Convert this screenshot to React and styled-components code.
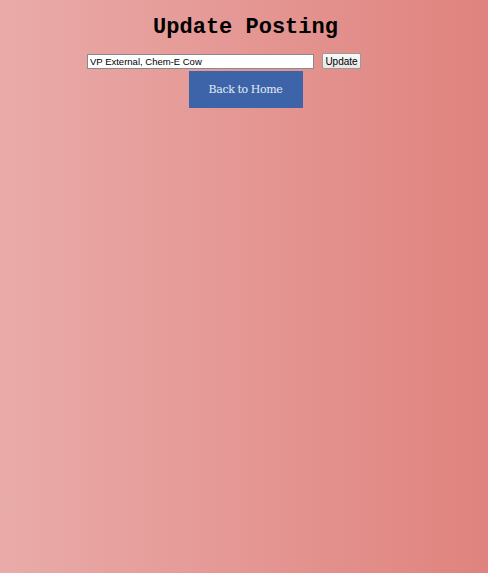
import React, { useState } from "react";
import styled, { createGlobalStyle } from "styled-components";

const GlobalStyle = createGlobalStyle`
	html, body {
		margin: 0;
		min-height: 100%;
	}
	body {
		background: linear-gradient(to right, #e9aba9, #e0837e);
		font-family: "Liberation Sans", Arial, sans-serif;
	}
`;

const Page = styled.div`
	min-height: 573px;
	display: flex;
	flex-direction: column;
	align-items: center;
	padding: 15px 0 0 3px;
	box-sizing: border-box;
`;

const Title = styled.h1`
	margin: 0 0 12px;
	font-family: "Liberation Mono", "Courier New", monospace;
	font-size: 22px;
	font-weight: bold;
	color: #000;
	line-height: 26px;
`;

const Form = styled.form`
	display: flex;
	align-items: center;
	gap: 8px;
	margin-left: -43px;
`;

const Input = styled.input`
	width: 227px;
	height: 15px;
	box-sizing: border-box;
	border: 1px solid #8a8a8a;
	padding: 0 2px;
	font-family: "Liberation Sans", Arial, sans-serif;
	font-size: 9.5px;
	color: #000;
	background: #fff;
`;

const SubmitButton = styled.button`
	width: 39px;
	height: 16px;
	padding: 0;
	box-sizing: border-box;
	border: 1px solid #9a9a9a;
	border-radius: 2px;
	background: linear-gradient(#fafafa, #e6e6e6);
	font-family: "Liberation Sans", Arial, sans-serif;
	font-size: 10px;
	color: #000;
`;

const HomeButton = styled.a`
	display: flex;
	align-items: center;
	justify-content: center;
	width: 114px;
	height: 37px;
	margin-top: 2px;
	background: #3d63a8;
	color: #e2ecf7;
	font-family: "DejaVu Serif", "Liberation Serif", serif;
	font-size: 11px;
	letter-spacing: -0.4px;
	text-decoration: none;
	cursor: pointer;
`;

const App = () => {
	const [value, setValue] = useState("VP External, Chem-E Cow");

	return (
		<>
			<GlobalStyle />
			<Page>
				<Title>Update Posting</Title>
				<Form onSubmit={(e) => e.preventDefault()}>
					<Input value={value} onChange={(e) => setValue(e.target.value)} />
					<SubmitButton type="submit">Update</SubmitButton>
				</Form>
				<HomeButton>Back to Home</HomeButton>
			</Page>
		</>
	);
};

export default App;
